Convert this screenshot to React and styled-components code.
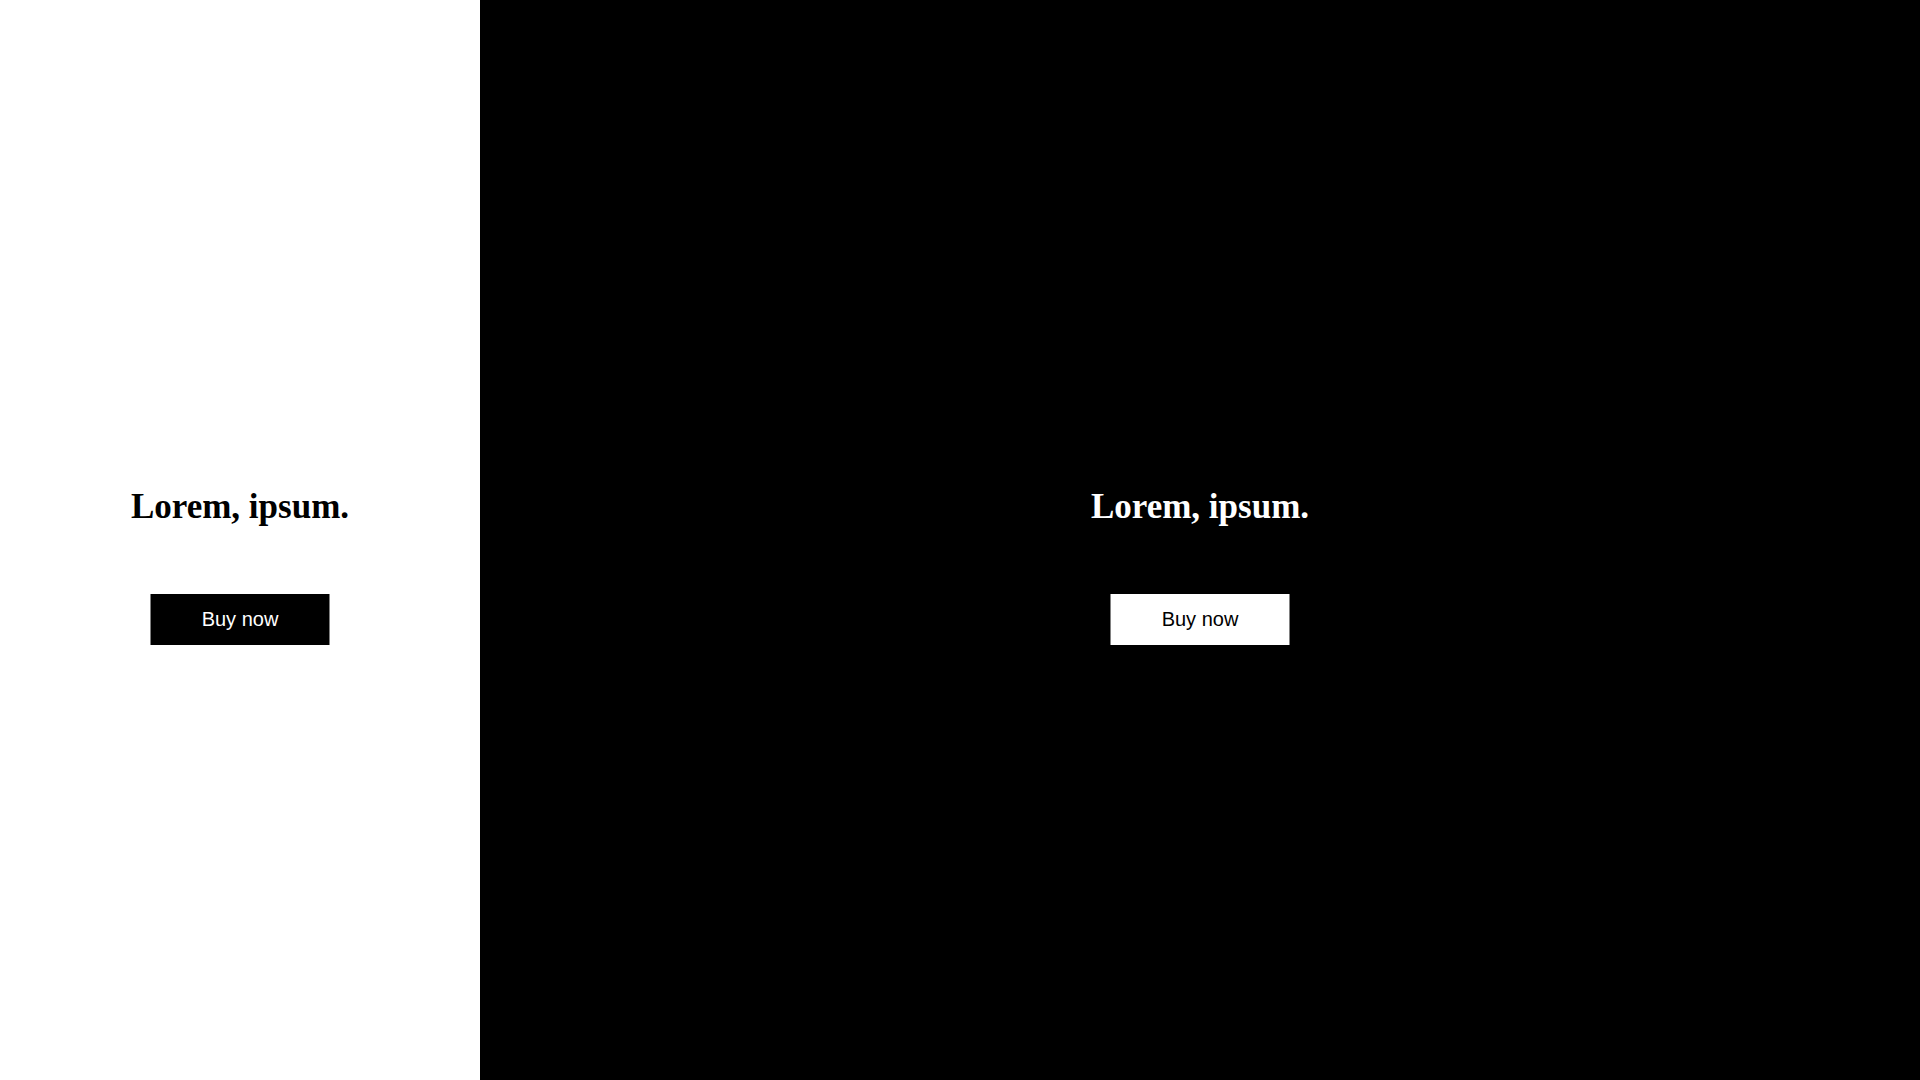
import React from 'react';
import styled, { createGlobalStyle } from 'styled-components';

const GlobalStyle = createGlobalStyle`
    html, body {
        margin: 0;
        padding: 0;
    }
    body {
        font-family: "Liberation Serif", "Times New Roman", serif;
    }
`;

const Page = styled.div`
    display: grid;
    grid-template-columns: 480px 1fr;
    width: 100%;
    height: 1080px;
`;

const Panel = styled.section`
    display: flex;
    flex-direction: column;
    align-items: center;
    justify-content: center;
    padding-top: 51px;
    box-sizing: border-box;
    background: ${props => (props.dark ? '#000' : '#fff')};
    color: ${props => (props.dark ? '#fff' : '#000')};
`;

const Title = styled.h1`
    margin: 0;
    font-family: "Liberation Serif", "Times New Roman", serif;
    font-size: 35px;
    font-weight: bold;
    line-height: 42px;
`;

const BuyButton = styled.button`
    margin-top: 66px;
    width: 180px;
    height: 51px;
    border: none;
    border-left: 1px solid #808080;
    border-right: 1px solid #808080;
    font-family: "Liberation Sans", Arial, sans-serif;
    font-size: 20px;
    cursor: pointer;
    background: ${props => (props.dark ? '#fff' : '#000')};
    color: ${props => (props.dark ? '#000' : '#fff')};
`;

function Card(props) {
    return (
        <Panel dark={props.dark}>
            <Title>Lorem, ipsum.</Title>
            <BuyButton dark={props.dark}>Buy now</BuyButton>
        </Panel>
    );
}

export default function App() {
    return (
        <>
            <GlobalStyle />
            <Page>
                <Card />
                <Card dark />
            </Page>
        </>
    );
}
